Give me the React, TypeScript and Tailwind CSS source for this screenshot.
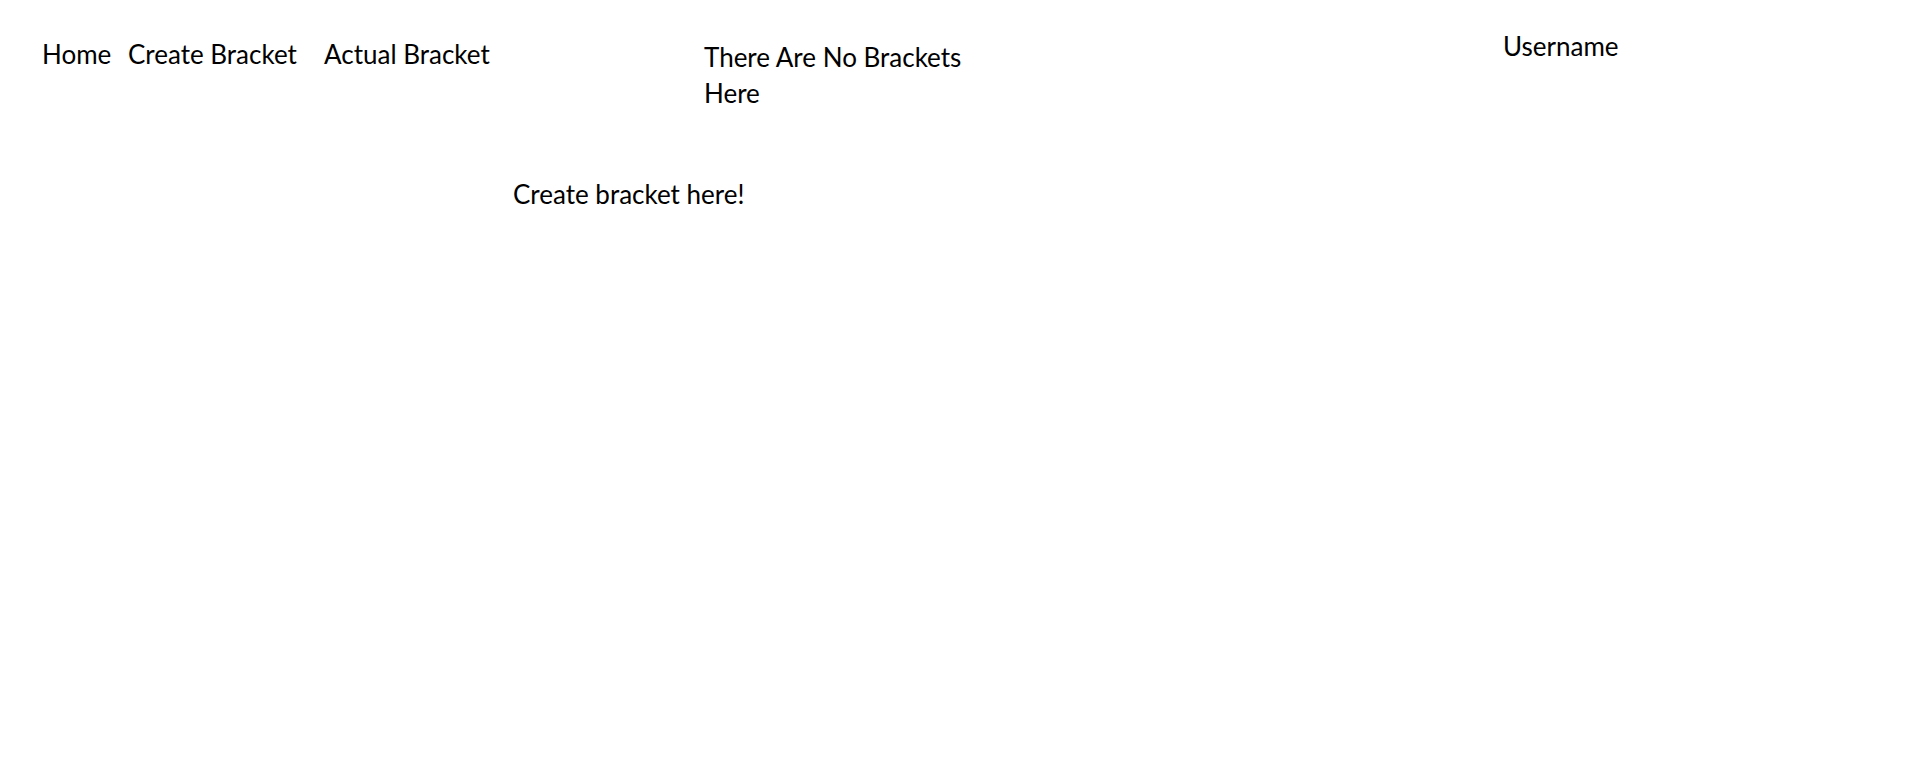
import React from "react";

const navLinks = [
  { label: "Home", width: "w-[86px]" },
  { label: "Create Bracket", width: "w-[196px]" },
  { label: "Actual Bracket", width: "" },
];

const App: React.FC = () => {
  return (
    <div className="min-h-screen bg-white text-black font-['Lato',sans-serif] text-[26px] leading-[36px]">
      <header className="flex items-start pl-[42px] pt-[28px]">
        <nav className="flex w-[662px] mt-[8px]">
          {navLinks.map((link) => (
            <a key={link.label} href="#" className={`${link.width} whitespace-nowrap`}>
              {link.label}
            </a>
          ))}
        </nav>
        <div className="w-[799px] mt-[11px]">
          <h1 className="w-[262px]">There Are No Brackets Here</h1>
        </div>
        <div>Username</div>
      </header>

      <main className="pl-[513px] mt-[65px]">
        <p>Create bracket here!</p>
      </main>
    </div>
  );
};

export default App;
